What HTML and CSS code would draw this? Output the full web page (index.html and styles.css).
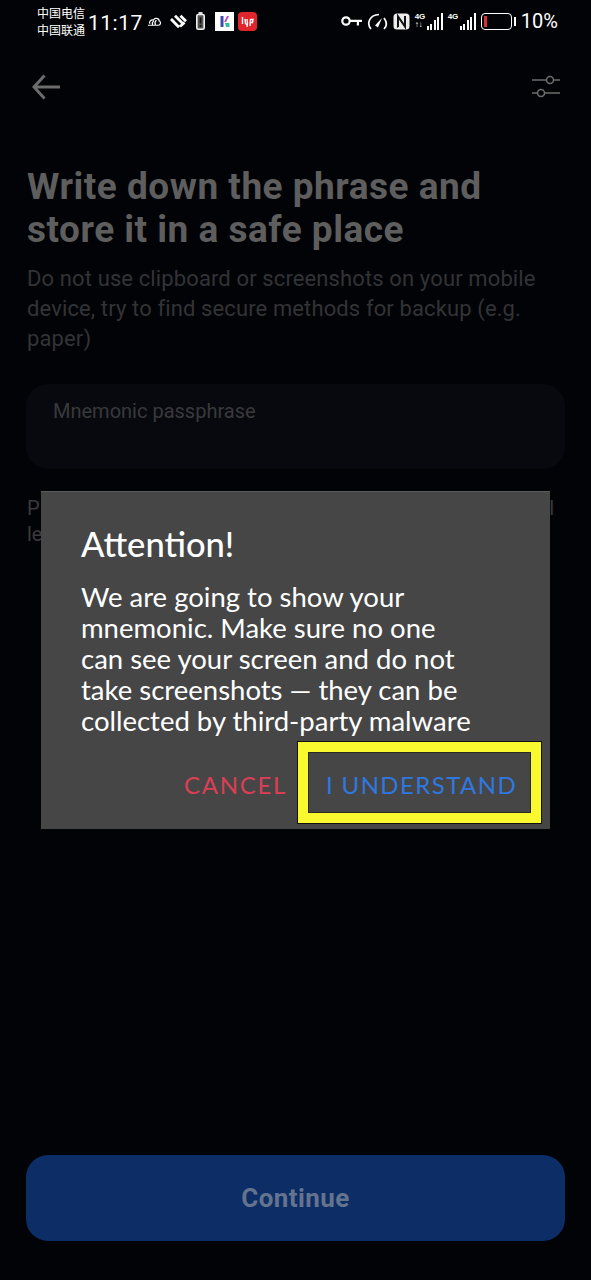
FILE: index.html
```html
<!DOCTYPE html>
<html lang="en">
<head>
<meta charset="utf-8">
<title>Write down the phrase</title>
<link rel="stylesheet" href="styles.css">
</head>
<body>
<div class="screen">
  <div class="status">
    <div class="carrier"><span>中国电信</span><span>中国联通</span></div>
    <div class="time">11:17</div>
    <svg class="ic-cloud" viewBox="0 0 16 11"><path d="M1 9.500h11c3 0 3-4 1-4.500 0-3-5-4-6-1-3-1-5 2-4 4M6 9c-1-2 0-3 1-4M9 9c-1-2 0-4 1-5" fill="none" stroke="#fff" stroke-width="1.300"/></svg>
    <svg class="ic-heart" viewBox="0 0 18 15"><path d="M1 5 9 13.200M5 1.800 12.500 9.200M10.500 1.800 16 7.200M10 12.500 14.500 8.500" fill="none" stroke="#fff" stroke-width="2.800"/></svg>
    <svg class="ic-alert" viewBox="0 0 9 18"><rect x="2.500" y="0" width="4" height="2" fill="#ddd"/><rect x=".8" y="2.500" width="7.400" height="14.700" rx="1.500" fill="#555" stroke="#f0f0f0" stroke-width="1.600"/><rect x="3.700" y="5.500" width="1.700" height="6" fill="#111"/><rect x="3.700" y="13" width="1.700" height="1.800" fill="#111"/></svg>
    <svg class="ic-app" viewBox="0 0 19 19"><rect width="19" height="19" fill="#fff"/><path d="M5.500 4h3v11h-3z" fill="#3b4bb0"/><path d="M9 10l3-6h2l-3 6z" fill="#b04bc0"/><path d="M10 11h4.500v4H11z" fill="#35c0a5"/></svg>
    <svg class="ic-red" viewBox="0 0 19 19"><rect width="19" height="19" rx="4" fill="#e0262c"/><path d="M4.500 5v7M7 7l.5 4.500c.5 1 1.500 1 2 0L9 7M9.500 11l-.5 4M12.500 7l-.5 7M12.500 7.500h2.500l-.5 3h-2.500" fill="none" stroke="#fff" stroke-width="1.400"/></svg>
    <div class="status-gap"></div>
    <svg class="ic-key" viewBox="0 0 21 12"><circle cx="5" cy="6" r="3.700" fill="none" stroke="#fff" stroke-width="2.200"/><path d="M9 4.800h12v2.200h-3v3.500h-2.200V7H9z" fill="#fff"/></svg>
    <svg class="ic-gauge" viewBox="0 0 21 17"><path d="M4 16C-1 10 3 2 12 1.500M17 5c3 4 3 8 0 11" fill="none" stroke="#fff" stroke-width="1.700"/><path d="M8 12.500 15 5l-4 9.500z" fill="#fff"/></svg>
    <svg class="ic-nfc" viewBox="0 0 17 17"><rect x=".5" y=".5" width="16" height="16" rx="3.500" fill="#ececec"/><path d="M4.500 2v13" stroke="#555" stroke-width="1"/><path d="M5 14V3.500l7 10V3" fill="none" stroke="#111" stroke-width="2"/></svg>
    <div class="signal">
      <span class="net"><b>4G</b><b>↑↓</b></span>
      <span class="bars"><i class="b1"></i><i class="b2"></i><i class="b3"></i><i class="b4"></i><i class="b5"></i></span>
    </div>
    <div class="signal second">
      <span class="net"><b>4G</b></span>
      <span class="bars"><i class="b1"></i><i class="b2"></i><i class="b3"></i><i class="b4"></i><i class="b5"></i></span>
    </div>
    <div class="battery"><div class="battery-body"><div class="battery-level"></div></div><div class="battery-tip"></div></div>
    <div class="percent">10%</div>
  </div>

  <div class="toolbar">
    <svg class="ic-back" viewBox="0 0 28 26"><path d="M12.500 1.500 2 13l10.500 11.500M2 13h26" fill="none" stroke="#6c6c6c" stroke-width="3"/></svg>
    <svg class="ic-sliders" viewBox="0 0 28 24"><path d="M0 5h14M22 5h6M0 18h5M13 18h15" stroke="#6e6e6e" stroke-width="1.500"/><circle cx="18" cy="5" r="3.500" fill="none" stroke="#6e6e6e" stroke-width="1.500"/><circle cx="9" cy="18" r="3.500" fill="none" stroke="#6e6e6e" stroke-width="1.500"/></svg>
  </div>

  <main class="content">
    <h1 class="title">Write down the phrase and store it in a safe place</h1>
    <p class="subtitle">Do not use clipboard or screenshots on your mobile device, try to find secure methods for backup (e.g. paper)</p>
    <div class="field">Mnemonic passphrase</div>
    <div class="hint"><span>P<br>le</span><span>l</span></div>
    <div class="spacer"></div>
    <div class="continue">Continue</div>
  </main>

  <div class="dialog">
    <h2 class="dialog-title">Attention!</h2>
    <p class="dialog-text">We are going to show your<br>mnemonic. Make sure no one<br>can see your screen and do not<br>take screenshots — they can be<br>collected by third-party malware</p>
    <div class="dialog-actions">
      <span class="btn-cancel">CANCEL</span>
      <span class="btn-ok">I UNDERSTAND</span>
    </div>
  </div>
</div>
</body>
</html>
```

FILE: styles.css
```css
* { box-sizing: border-box; }
html, body { margin: 0; padding: 0; background: #020306; }
.screen {
  position: relative;
  width: 591px;
  height: 1280px;
  overflow: hidden;
  display: flex;
  flex-direction: column;
  background: #020306;
  font-family: Roboto, "Liberation Sans", sans-serif;
}
.status {
  height: 44px;
  padding: 0 33px 2px 37px;
  display: flex;
  align-items: center;
  color: #fff;
  flex: none;
}
.carrier {
  display: flex;
  flex-direction: column;
  width: 51px;
  font: 12px/17px "Noto Sans CJK SC", sans-serif;
}
.time { font-size: 21px; letter-spacing: .5px; width: 59px; padding-top: 3px; }
.ic-cloud { width: 15px; height: 11px; margin-right: 8px; }
.ic-heart { width: 18px; height: 15px; margin-right: 8px; }
.ic-alert { width: 9px; height: 18px; margin-right: 10px; }
.ic-app { width: 19px; height: 19px; margin-right: 4px; }
.ic-red { width: 19px; height: 19px; }
.status-gap { flex: 1; }
.ic-key { width: 21px; height: 12px; margin-right: 5px; }
.ic-gauge { width: 21px; height: 17px; margin-right: 5px; }
.ic-nfc { width: 17px; height: 17px; margin-right: 5px; }
.signal { display: flex; align-items: center; gap: 2px; margin-right: 5px; }
.signal.second { margin-right: 5px; }
.net { display: flex; flex-direction: column; width: 10px; }
.net b { font: 700 8px/8px "Liberation Sans", sans-serif; letter-spacing: -.4px; white-space: nowrap; }
.second .net { align-self: flex-start; }
.bars { display: flex; align-items: flex-end; gap: 1.500px; height: 17px; }
.bars i { width: 2px; background: #fff; display: block; }
.b1 { height: 4px; } .b2 { height: 6px; } .b3 { height: 10px; } .b4 { height: 13px; } .b5 { height: 17px; }
.battery { display: flex; align-items: center; gap: 2px; margin-right: 5px; }
.battery-body { width: 31px; height: 17px; border: 1.500px solid #fff; border-radius: 4px; padding: 2px; }
.battery-level { width: 3px; height: 100%; background: #d5303c; }
.battery-tip { width: 2px; height: 9px; background: #fff; }
.percent { font-size: 20px; }

.toolbar {
  height: 86px;
  padding: 0 31px 0 32px;
  display: flex;
  align-items: center;
  justify-content: space-between;
  flex: none;
}
.ic-back { width: 28px; height: 26px; }
.ic-sliders { width: 28px; height: 24px; }

.content {
  flex: 1;
  padding: 35px 26px 39px;
  display: flex;
  flex-direction: column;
}
.title {
  margin: 0 0 0 1px;
  font-size: 37px;
  line-height: 43px;
  font-weight: 700;
  letter-spacing: .5px;
  color: #5e5e5e;
}
.subtitle {
  margin: 13px 0 0 1px;
  font-size: 22px;
  line-height: 30px;
  letter-spacing: .12px;
  color: #323336;
}
.field {
  margin-top: 30px;
  height: 85px;
  border-radius: 22px;
  background: #08090e;
  padding: 16px 27px;
  font-size: 20px;
  line-height: 23px;
  color: #38393c;
}
.hint {
  margin: 26px 11px 0 1px;
  font-size: 20px;
  line-height: 26px;
  color: #3a3a3d;
  display: flex;
  justify-content: space-between;
}
.spacer { flex: 1; }
.continue {
  height: 86px;
  border-radius: 22px;
  background: #0c2d65;
  display: flex;
  align-items: center;
  justify-content: center;
  font-size: 26px;
  font-weight: 700;
  letter-spacing: .4px;
  color: #64738e;
}

.dialog {
  position: absolute;
  left: 41px;
  top: 491px;
  width: 509px;
  height: 338px;
  background: #464646;
  border-top: 1px solid #5c5c5c;
  padding: 31px 8px 5px 40px;
  display: flex;
  flex-direction: column;
  font-family: Lato, "Noto Sans", sans-serif;
  color: #fff;
}
.dialog-title { margin: 0; font-size: 34.500px; line-height: 42px; font-weight: 500; }
.dialog-text { margin: 16px 0 0; font-size: 27.500px; line-height: 31px; white-space: nowrap; }
.dialog-actions {
  margin-top: auto;
  display: flex;
  align-items: center;
  justify-content: flex-end;
  gap: 10px;
}
.btn-cancel { color: #dc3f55; font-size: 24px; letter-spacing: 1.700px; padding-top: 3px; }
.btn-ok {
  width: 245px;
  height: 83px;
  border: 11px solid #faf92f;
  outline: 1px solid #111;
  outline-offset: -1px;
  box-shadow: inset 0 0 0 1px #2a2a20;
  padding: 3px 0 0 4px;
  color: #2f78e0;
  font-size: 24px;
  letter-spacing: 1.400px;
  display: flex;
  align-items: center;
  justify-content: center;
}
```
